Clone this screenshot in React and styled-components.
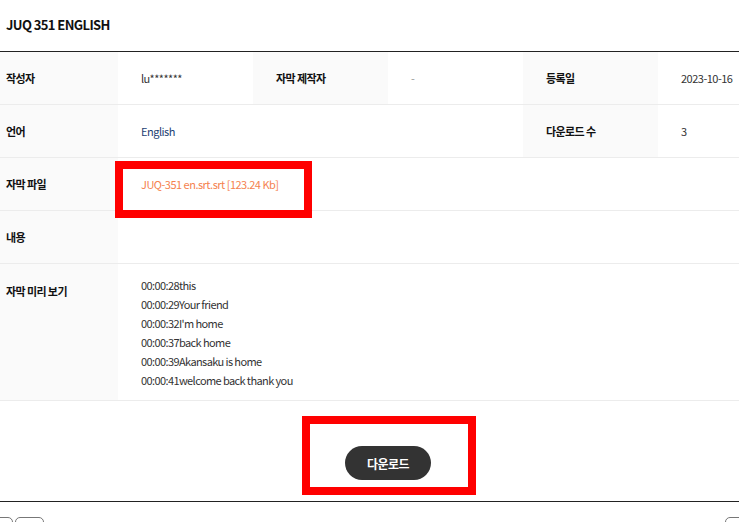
import React from 'react';
import styled, { createGlobalStyle } from "styled-components";

const GlobalStyle = createGlobalStyle`
  html, body {
    margin: 0;
    padding: 0;
    background: #fff;
    overflow: hidden;
  }
  body {
    font-family: "Noto Sans CJK KR", "Noto Sans", sans-serif;
    color: #222;
  }
`

const preview = [
  "00:00:28this",
  "00:00:29Your friend",
  "00:00:32I'm home",
  "00:00:37back home",
  "00:00:39Akansaku is home",
  "00:00:41welcome back thank you",
];

function App() {
  return (
    <Page>
      <GlobalStyle />
      <Title>JUQ 351 ENGLISH</Title>

      <Table>
        <colgroup>
          <col style={{ width: 118 }} />
          <col style={{ width: 135 }} />
          <col style={{ width: 135 }} />
          <col style={{ width: 135 }} />
          <col style={{ width: 135 }} />
          <col style={{ width: 81 }} />
        </colgroup>
        <tbody>
          <Row>
            <Label first>작성자</Label>
            <Value>lu*******</Value>
            <Label>자막 제작자</Label>
            <Value muted>-</Value>
            <Label>등록일</Label>
            <Value>2023-10-16</Value>
          </Row>
          <Row>
            <Label first>언어</Label>
            <Value colSpan={3} blue>English</Value>
            <Label>다운로드 수</Label>
            <Value>3</Value>
          </Row>
          <Row>
            <Label first>자막 파일</Label>
            <Value colSpan={5}>
              <FileLink>JUQ-351 en.srt.srt [123.24 Kb]</FileLink>
              <Marker style={{ left: -3, top: 3, width: 181, height: 41 }} />
            </Value>
          </Row>
          <Row>
            <Label first>내용</Label>
            <Value colSpan={5}></Value>
          </Row>
          <Row tall>
            <Label first>자막 미리 보기</Label>
            <Value colSpan={5}>
              <Preview>
                {preview.map((line, i) => (
                  <li key={i}>{line}</li>
                ))}
              </Preview>
            </Value>
          </Row>
        </tbody>
      </Table>

      <ButtonArea>
        <ButtonWrap>
          <DownloadButton>다운로드</DownloadButton>
          <Marker style={{ left: -43, top: -30, width: 158, height: 63 }} />
        </ButtonWrap>
      </ButtonArea>

      <Pager>
        <PagerLeft>
          <PageBtn w={30} />
          <PageBtn w={29} />
        </PagerLeft>
        <PageBtn w={30} edge />
      </Pager>
    </Page>
  )
}

export default App;

const Page = styled.div`
  width: 739px;
  height: 522px;
  overflow: hidden;
`

const Title = styled.h1`
  margin: 0;
  height: 51px;
  display: flex;
  align-items: center;
  padding: 0 0 3px 6px;
  box-sizing: border-box;
  font-size: 13px;
  font-weight: 700;
  letter-spacing: -0.6px;
  color: #111;
`

const Table = styled.table`
  width: 739px;
  table-layout: fixed;
  border-collapse: collapse;
  border-top: 1px solid #222;
`

const Row = styled.tr`
  height: ${p => (p.tall ? "auto" : "53px")};
  border-bottom: 1px solid #ececec;

  td {
    vertical-align: ${p => (p.tall ? "top" : "middle")};
  }
  td:first-child {
    padding-top: ${p => (p.tall ? "19px" : "0")};
    line-height: 16px;
  }
`

const Label = styled.td`
  background: #fafafa;
  padding: 0 0 0 ${p => (p.first ? "6px" : "23px")};
  font-size: 11px;
  font-weight: 700;
  letter-spacing: -0.6px;
  color: #111;
  white-space: nowrap;
`

const Value = styled.td`
  position: relative;
  background: #fff;
  padding: 0 0 0 23px;
  font-size: 11px;
  letter-spacing: -0.5px;
  color: ${p => (p.blue ? "#1d3f73" : p.muted ? "#999" : "#333")};
  white-space: nowrap;
`

const FileLink = styled.a`
  color: #f5824f;
  text-decoration: none;
  cursor: pointer;
`

const Marker = styled.span`
  position: absolute;
  z-index: 2;
  border: 8px solid #ff0000;
  pointer-events: none;
`

const Preview = styled.ul`
  list-style: none;
  margin: 0;
  padding: 12px 0 10px 0;

  li {
    height: 19px;
    line-height: 19px;
    font-size: 11px;
    letter-spacing: -0.6px;
    color: #333;
  }
`

const ButtonArea = styled.div`
  height: 101px;
  display: flex;
  justify-content: center;
  align-items: flex-start;
  padding: 45px 0 0 37px;
  box-sizing: border-box;
  border-bottom: 1px solid #222;
`

const ButtonWrap = styled.div`
  position: relative;
`

const DownloadButton = styled.button`
  width: 86px;
  height: 34px;
  border: 0;
  border-radius: 17px;
  background: #333;
  color: #fff;
  font-family: "Noto Sans CJK KR", sans-serif;
  font-size: 12px;
  font-weight: 700;
  letter-spacing: -0.5px;
  cursor: pointer;
`

const Pager = styled.div`
  display: flex;
  justify-content: space-between;
  padding-top: 15px;
`

const PagerLeft = styled.div`
  display: flex;
  gap: 2px;
  margin-left: -17px;
`

const PageBtn = styled.span`
  display: block;
  width: ${p => p.w}px;
  height: 24px;
  margin-right: ${p => (p.edge ? "-16px" : "0")};
  border: 1px solid #777;
  border-radius: 5px;
  box-sizing: border-box;
`
